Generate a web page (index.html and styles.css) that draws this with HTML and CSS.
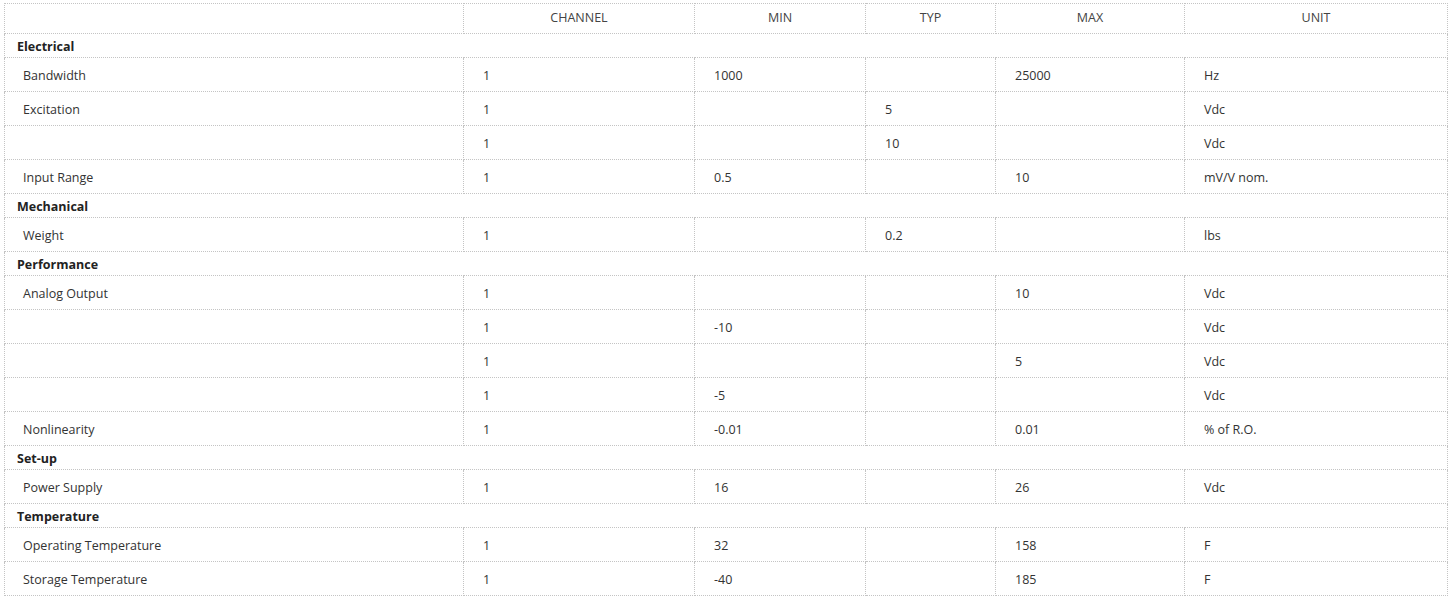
FILE: index.html
```html
<!DOCTYPE html>
<html>
<head>
<meta charset="utf-8">
<link rel="stylesheet" href="styles.css">
</head>
<body>
<table class="spec">
  <colgroup>
    <col class="c-label"><col class="c-ch"><col class="c-min"><col class="c-typ"><col class="c-max"><col class="c-unit">
  </colgroup>
  <thead>
    <tr class="head"><th></th><th>CHANNEL</th><th>MIN</th><th>TYP</th><th>MAX</th><th>UNIT</th></tr>
  </thead>
  <tbody>
    <tr class="group"><td colspan="6">Electrical</td></tr>
    <tr class="row"><td class="label">Bandwidth</td><td>1</td><td>1000</td><td></td><td>25000</td><td>Hz</td></tr>
    <tr class="row"><td class="label">Excitation</td><td>1</td><td></td><td>5</td><td></td><td>Vdc</td></tr>
    <tr class="row"><td class="label"></td><td>1</td><td></td><td>10</td><td></td><td>Vdc</td></tr>
    <tr class="row"><td class="label">Input Range</td><td>1</td><td>0.5</td><td></td><td>10</td><td>mV/V nom.</td></tr>
    <tr class="group"><td colspan="6">Mechanical</td></tr>
    <tr class="row"><td class="label">Weight</td><td>1</td><td></td><td>0.2</td><td></td><td>lbs</td></tr>
    <tr class="group"><td colspan="6">Performance</td></tr>
    <tr class="row"><td class="label">Analog Output</td><td>1</td><td></td><td></td><td>10</td><td>Vdc</td></tr>
    <tr class="row"><td class="label"></td><td>1</td><td>-10</td><td></td><td></td><td>Vdc</td></tr>
    <tr class="row"><td class="label"></td><td>1</td><td></td><td></td><td>5</td><td>Vdc</td></tr>
    <tr class="row"><td class="label"></td><td>1</td><td>-5</td><td></td><td></td><td>Vdc</td></tr>
    <tr class="row"><td class="label">Nonlinearity</td><td>1</td><td>-0.01</td><td></td><td>0.01</td><td>% of R.O.</td></tr>
    <tr class="group"><td colspan="6">Set-up</td></tr>
    <tr class="row"><td class="label">Power Supply</td><td>1</td><td>16</td><td></td><td>26</td><td>Vdc</td></tr>
    <tr class="group"><td colspan="6">Temperature</td></tr>
    <tr class="row"><td class="label">Operating Temperature</td><td>1</td><td>32</td><td></td><td>158</td><td>F</td></tr>
    <tr class="row"><td class="label">Storage Temperature</td><td>1</td><td>-40</td><td></td><td>185</td><td>F</td></tr>
  </tbody>
</table>
</body>
</html>
```

FILE: styles.css
```css
html, body {
  margin: 0;
  padding: 0;
  background: #fff;
}
body {
  padding: 3px 6px 0 4px;
  font-family: "Open Sans", "Noto Sans", sans-serif;
  font-size: 12.5px;
  color: #333;
}
.spec {
  border-collapse: collapse;
  table-layout: fixed;
  width: 1443px;
}
.c-label { width: 459px; }
.c-ch { width: 231px; }
.c-min { width: 171px; }
.c-typ { width: 130px; }
.c-max { width: 189px; }
.c-unit { width: 263px; }
.spec th, .spec td {
  border: 1px dotted #c4c4c4;
  padding: 0 0 0 19px;
  text-align: left;
  vertical-align: middle;
  white-space: nowrap;
}
.head th {
  height: 26px;
  padding: 0 0 3px;
  text-align: center;
  font-weight: normal;
  color: #444;
}
.group td {
  height: 21px;
  padding: 2px 0 0 12px;
  font-weight: bold;
  color: #222;
}
.row td {
  height: 31px;
  padding-top: 2px;
}
.row td.label {
  padding-left: 18px;
}
```
